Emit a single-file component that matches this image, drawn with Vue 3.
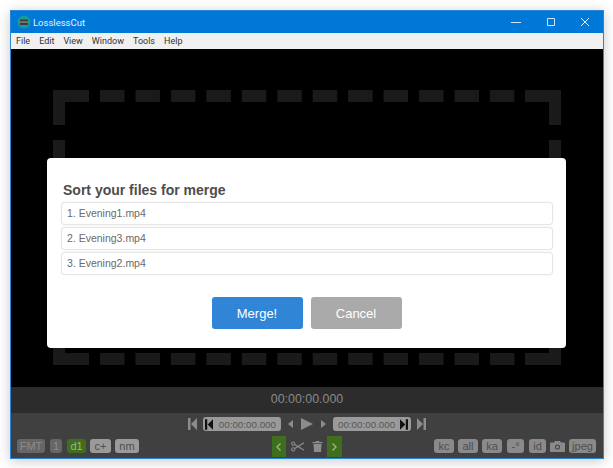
<template>
  <div class="page">
    <div class="window">
      <header class="titlebar">
        <svg class="app-icon" viewBox="0 0 14 14" width="14" height="14">
          <circle cx="7" cy="7" r="6.5" fill="#1c9a94" />
          <rect x="3" y="4.5" width="8" height="5.5" fill="#3a3f45" />
          <rect x="3" y="6.5" width="8" height="1" fill="#9aa3a8" />
        </svg>
        <span class="app-name">LosslessCut</span>
        <div class="win-buttons">
          <svg viewBox="0 0 10 10" width="10" height="10"><path d="M0 5.5h10" stroke="#cfe4f7" fill="none" /></svg>
          <svg viewBox="0 0 10 10" width="10" height="10"><path d="M1.5 1.5h7v7h-7z" stroke="#cfe4f7" fill="none" /></svg>
          <svg viewBox="0 0 10 10" width="10" height="10"><path d="M1 1l8 8M9 1l-8 8" stroke="#e8f2fb" fill="none" /></svg>
        </div>
      </header>

      <nav class="menubar">
        <span v-for="item in menu" :key="item">{{ item }}</span>
      </nav>

      <main class="video">
        <svg class="frame" viewBox="0 0 590 338" width="590" height="338">
          <g fill="#1a1a1a">
            <path d="M42 41h36v12H54v23H42z" />
            <path d="M514 41h36v35h-12V53h-24z" />
            <path d="M42 304h36v12H42z" />
            <path d="M514 304h36v12h-36z" />
            <rect v-for="x in dashes" :key="'t' + x" :x="x" y="41" width="24.5" height="12" />
            <rect v-for="x in dashes" :key="'b' + x" :x="x" y="304" width="24.5" height="12" />
            <rect x="42" y="91" width="12" height="18" />
            <rect x="538" y="91" width="12" height="18" />
            <rect x="42" y="286" width="12" height="18" />
            <rect x="538" y="286" width="12" height="18" />
          </g>
        </svg>

        <div class="modal">
          <h2 class="modal-title">Sort your files for merge</h2>
          <ul class="file-list">
            <li v-for="(file, i) in files" :key="file">{{ i + 1 }}. {{ file }}</li>
          </ul>
          <div class="modal-actions">
            <button class="btn merge">Merge!</button>
            <button class="btn cancel">Cancel</button>
          </div>
        </div>
      </main>

      <section class="timecode">00:00:00.000</section>

      <section class="controls">
        <div class="transport">
          <svg viewBox="0 0 9 12" width="9" height="12" class="ctl"><path d="M0 0h2.5v12H0zM9 0v12L3 6z" /></svg>
          <div class="time-pill start">
            <svg viewBox="0 0 9 12" width="8" height="11" class="dark"><path d="M0 0h2.5v12H0zM9 0v12L3 6z" /></svg>
            <span>00:00:00.000</span>
          </div>
          <svg viewBox="0 0 5 8" width="5" height="8" class="ctl step-back"><path d="M5 0v8L0 4z" /></svg>
          <svg viewBox="0 0 12 12" width="12" height="12" class="ctl"><path d="M0 0l12 6-12 6z" /></svg>
          <svg viewBox="0 0 5 8" width="5" height="8" class="ctl step-next"><path d="M0 0v8l5-4z" /></svg>
          <div class="time-pill end">
            <span>00:00:00.000</span>
            <svg viewBox="0 0 9 12" width="8" height="11" class="dark"><path d="M9 0H6.500v12H9zM0 0v12l6-6z" /></svg>
          </div>
          <svg viewBox="0 0 9 12" width="9" height="12" class="ctl"><path d="M9 0H6.500v12H9zM0 0v12l6-6z" /></svg>
        </div>

        <div class="toolbar">
          <div class="tags">
            <span class="tag dim fmt">FMT</span>
            <span class="tag dim one">1</span>
            <span class="tag on d1">d1</span>
            <span class="tag c">c+</span>
            <span class="tag nm">nm</span>
          </div>

          <div class="cut-tools">
            <div class="mark left">
              <svg viewBox="0 0 5 8" width="5" height="8"><path d="M4.500 .5L1 4l3.500 3.500" fill="none" stroke="#9fb48f" stroke-width="1.300" /></svg>
            </div>
            <svg class="scissors" viewBox="0 0 14 11" width="13" height="11">
              <g fill="none" stroke="#8c8c8c" stroke-width="1.200">
                <circle cx="2.400" cy="2.400" r="1.700" />
                <circle cx="2.400" cy="8.600" r="1.700" />
                <path d="M4 3.300L14 9.500M4 7.700L14 1.500" />
              </g>
            </svg>
            <svg class="trash" viewBox="0 0 10 11" width="11" height="11">
              <path d="M3.500 0h3l.5 1h3v1.300H0V1h3zM1 3h8l-.5 8h-7z" fill="#8c8c8c" />
            </svg>
            <div class="mark">
              <svg viewBox="0 0 5 8" width="5" height="8"><path d="M.5 .5L4 4 .5 7.500" fill="none" stroke="#9fb48f" stroke-width="1.300" /></svg>
            </div>
          </div>

          <div class="tags right">
            <span class="tag">kc</span>
            <span class="tag">all</span>
            <span class="tag ka">ka</span>
            <span class="tag small deg">-°</span>
            <span class="tag small">id</span>
            <svg class="camera" viewBox="0 0 15 11" width="15" height="11">
              <path fill-rule="evenodd" fill="#8a8a8a" d="M1 1.500h3L5 0h5l1 1.500h3a1 1 0 0 1 1 1V10a1 1 0 0 1-1 1H1a1 1 0 0 1-1-1V2.500a1 1 0 0 1 1-1zM7.500 3.500a2.500 2.500 0 1 0 0 5 2.500 2.500 0 0 0 0-5zM7.500 4.500a1.500 1.500 0 1 1 0 3 1.500 1.500 0 0 1 0-3z" />
            </svg>
            <span class="tag jpeg">jpeg</span>
          </div>
        </div>
      </section>
    </div>
  </div>
</template>

<script setup>
const menu = ['File', 'Edit', 'View', 'Window', 'Tools', 'Help']
const files = ['Evening1.mp4', 'Evening3.mp4', 'Evening2.mp4']

// dashes of the test frame in the video, between the two corners
const dashes = Array.from({ length: 12 }, (_, i) => 89 + i * 35.45)
</script>

<style>
body {
  background: #fff;
}
</style>

<style scoped>
.page {
  width: 613px;
  height: 468px;
  box-sizing: border-box;
  padding: 10px 9px 11px 10px;
  font-family: "Liberation Sans", Arial, sans-serif;
  overflow: hidden;
}

.window {
  height: 100%;
  display: flex;
  flex-direction: column;
  border: 1px solid #2a86d8;
  box-shadow: 0 2px 12px rgba(0, 0, 0, 0.22);
}

.titlebar {
  height: 22px;
  flex: none;
  display: flex;
  align-items: center;
  padding-left: 6px;
  background: #0078d7;
  color: #e6f1fb;
  font-family: Roboto, sans-serif;
  font-size: 9.500px;
}

.app-icon {
  margin-right: 2px;
}

.win-buttons {
  margin-left: auto;
  display: flex;
  gap: 24.500px;
  padding-right: 13px;
}

.menubar {
  height: 16px;
  flex: none;
  display: flex;
  align-items: center;
  gap: 9px;
  padding-left: 5px;
  background: #f0f0f0;
  color: #333;
  font-family: Roboto, sans-serif;
  font-size: 9px;
}

.video {
  position: relative;
  flex: 1;
  background: #000;
}

.frame {
  display: block;
}

.modal {
  position: absolute;
  left: 36px;
  top: 109px;
  width: 519px;
  height: 190px;
  box-sizing: border-box;
  padding: 24px 14px 0 15px;
  background: #fff;
  border-radius: 4px;
}

.modal-title {
  margin: 0;
  height: 21px;
  line-height: 17px;
  padding-left: 1px;
  font-size: 14px;
  font-weight: bold;
  color: #4d4d4d;
}

.file-list {
  list-style: none;
  margin: 0;
  padding: 0;
  display: flex;
  flex-direction: column;
  gap: 4px;
}

.file-list li {
  height: 21px;
  line-height: 20px;
  padding-left: 5px;
  border-radius: 2px;
  box-shadow: 0 0 2px rgba(0, 0, 0, 0.38);
  font-size: 10.500px;
  color: #6a6a6a;
}

.modal-actions {
  margin-top: 23px;
  display: flex;
  justify-content: center;
  gap: 8px;
  padding-right: 1px;
}

.btn {
  width: 91px;
  height: 32px;
  padding: 0;
  border: none;
  border-radius: 3px;
  color: #fff;
  font-family: inherit;
  font-size: 13px;
}

.merge {
  background: #3085d6;
}

.cancel {
  background: #aaa;
}

.timecode {
  height: 26px;
  flex: none;
  background: #2c2c2c;
  color: #8a8a8a;
  font-size: 12.400px;
  line-height: 24px;
  text-align: center;
}

.controls {
  flex: 1;
  background: #404040;
  display: flex;
  flex-direction: column;
}

.transport {
  height: 21px;
  flex: none;
  display: flex;
  align-items: center;
  justify-content: center;
  gap: 6px;
  padding-top: 1px;
  box-sizing: border-box;
}

.ctl {
  fill: #8c8c8c;
}

.step-back {
  margin: 0 2px 0 1px;
}

.step-next {
  margin: 0 1px 0 2px;
}

.time-pill {
  width: 78px;
  height: 14px;
  box-sizing: border-box;
  display: flex;
  align-items: center;
  justify-content: space-between;
  background: #9a9a9a;
  border-radius: 3px;
  color: #585858;
  font-size: 9.800px;
}

.time-pill.start {
  padding: 0 5px 0 2px;
}

.time-pill.end {
  padding: 0 3px 0 5px;
}

.dark {
  fill: #111;
}

.toolbar {
  flex: 1;
  display: grid;
  grid-template-columns: 1fr auto 1fr;
  padding: 1px 7px 0 6px;
}

.tags {
  display: flex;
  align-items: flex-start;
  gap: 4px;
  padding-top: 4px;
}

.tags.right {
  justify-content: flex-end;
}

.tag {
  height: 14px;
  width: 20px;
  flex: none;
  box-sizing: border-box;
  text-align: center;
  border-radius: 3px;
  background: #8a8a8a;
  color: #4f4f4f;
  font-size: 11px;
  line-height: 14px;
}

.tag.small {
  width: 17px;
}

.tag.ka {
  margin-right: 1px;
}

.tag.deg {
  margin-right: 1px;
}

.tag.jpeg {
  width: 27px;
}

.tag.dim {
  background: #666;
  color: #8c8c8c;
}

.fmt {
  width: 28px;
  margin-right: 1px;
}

.tag.one {
  width: 12px;
  margin-right: 1px;
}

.tag.on {
  width: 19px;
  background: #3f6f1c;
  color: #9fb48f;
}

.tag.c {
  width: 21px;
  background: #9a9a9a;
}

.tag.nm {
  width: 24px;
  background: #9a9a9a;
}

.cut-tools {
  display: flex;
  align-items: center;
  gap: 5px;
}

.mark {
  width: 15px;
  height: 21px;
  margin-left: -1px;
  display: flex;
  align-items: center;
  justify-content: center;
  background: #3f6f1c;
}

.mark.left {
  width: 14px;
  margin-left: 0;
}

.trash {
  margin-left: 3px;
}

.camera {
  margin-top: 2px;
}
</style>
